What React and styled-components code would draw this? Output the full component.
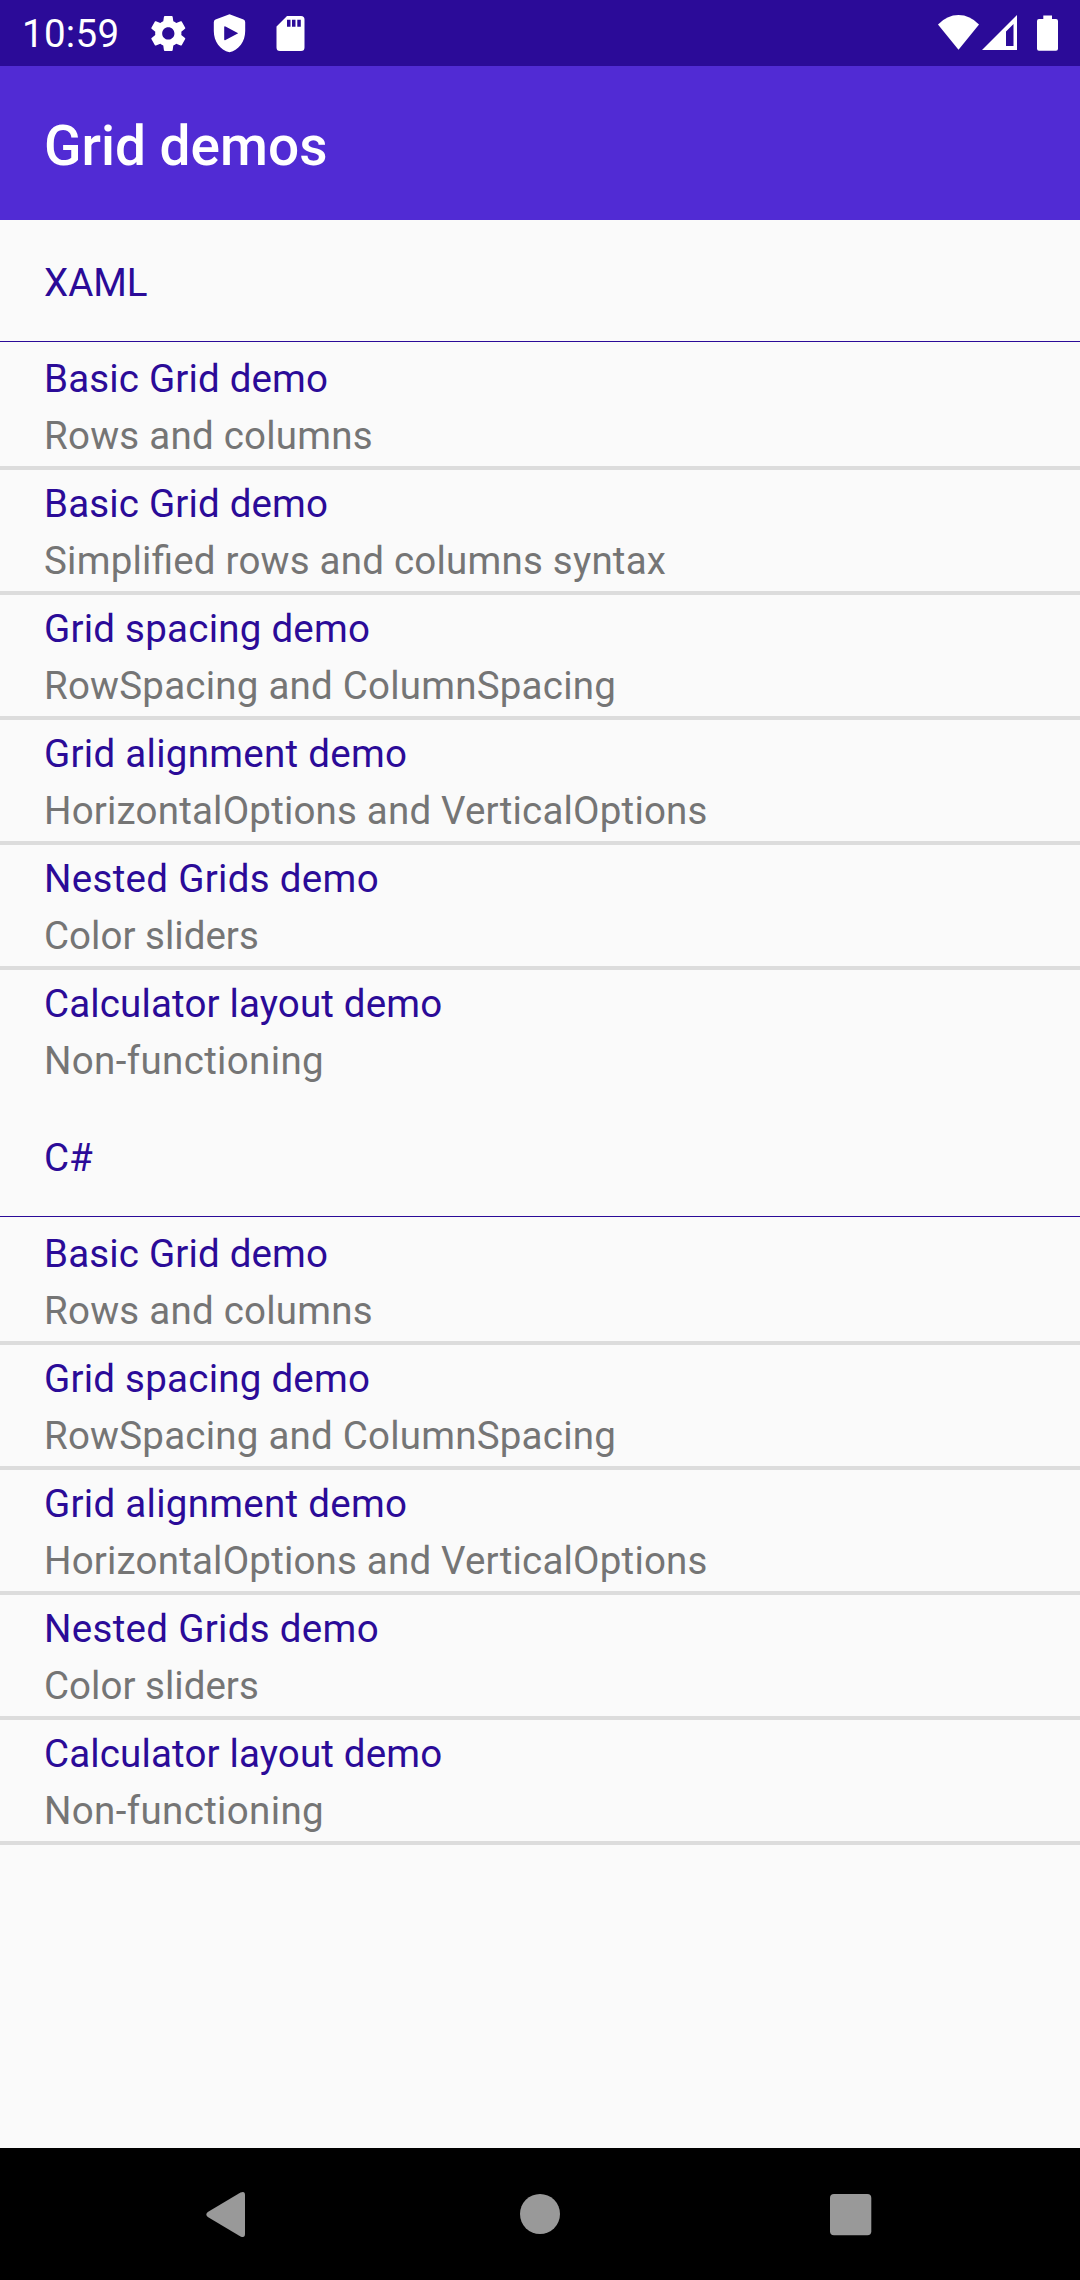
import React from "react";
import styled, { createGlobalStyle } from "styled-components";

const GlobalStyle = createGlobalStyle`
  * { box-sizing: border-box; }
  body { margin: 0; background: #fafafa; font-family: Roboto, "Liberation Sans", sans-serif; }
`;

const Screen = styled.div`
  display: flex;
  flex-direction: column;
  width: 1080px;
  height: 2280px;
  background: #fafafa;
  overflow: hidden;
`;

const StatusBar = styled.header`
  flex: none;
  display: flex;
  justify-content: space-between;
  height: 66px;
  padding: 0 21px 0 22px;
  background: #2b0b98;
  color: #fff;
`;

const StatusGroup = styled.div`
  display: flex;
  align-items: flex-start;
`;

const Clock = styled.span`
  width: 125px;
  font-size: 38.5px;
  letter-spacing: 0.3px;
  line-height: 68px;
`;

const Glyph = styled.svg`
  display: block;
  flex: none;
  fill: #fff;
`;

const AppBar = styled.div`
  flex: none;
  height: 154px;
  padding-left: 44px;
  background: #512bd4;
`;

const Title = styled.h1`
  margin: 0;
  color: #fff;
  font-size: 55px;
  font-weight: 500;
  line-height: 160px;
`;

const List = styled.main`
  flex: 1;
`;

const SectionHeader = styled.h2`
  display: flex;
  flex-direction: column;
  height: 125px;
  margin: 0;
  color: #2b0b98;
  font-size: 38.5px;
  font-weight: 400;
`;

const SectionName = styled.span`
  height: 122px;
  padding-left: 44px;
  border-bottom: 1px solid #2b0b98;
  line-height: 125px;
`;

const Row = styled.div`
  height: 125px;
  padding: 5px 0 0 44px;
  border-bottom: 4px solid ${(p) => (p.$divided ? "#dcdcdc" : "transparent")};
  font-size: 38.5px;
  line-height: 57px;
  font-feature-settings: "liga" 1;
`;

const Name = styled.div`
  color: #2b0b98;
  letter-spacing: ${(p) => p.$tracking}px;
`;

const Detail = styled.div`
  color: #757575;
  letter-spacing: ${(p) => p.$tracking}px;
`;

const NavBar = styled.nav`
  flex: none;
  display: flex;
  align-items: center;
  gap: 240px;
  height: 132px;
  padding-left: 190px;
  background: #000;
`;

const NavGlyph = styled.svg`
  display: block;
  flex: none;
  fill: #999;
`;

const basic = { name: "Basic Grid demo", nameTracking: 0.17, detail: "Rows and columns", detailTracking: 0.24 };
const simplified = { name: "Basic Grid demo", nameTracking: 0.17, detail: "Simplified rows and columns syntax", detailTracking: 0.22 };
const spacing = { name: "Grid spacing demo", nameTracking: 0.24, detail: "RowSpacing and ColumnSpacing", detailTracking: 0.22 };
const alignment = { name: "Grid alignment demo", nameTracking: 0.28, detail: "HorizontalOptions and VerticalOptions", detailTracking: 0.19 };
const nested = { name: "Nested Grids demo", nameTracking: 0.31, detail: "Color sliders", detailTracking: 0.02 };
const calculator = { name: "Calculator layout demo", nameTracking: 0.15, detail: "Non-functioning", detailTracking: 0.35 };

const sections = [
  {
    name: "XAML",
    lastDivider: false,
    rows: [basic, simplified, spacing, alignment, nested, calculator],
  },
  {
    name: "C#",
    lastDivider: true,
    rows: [basic, spacing, alignment, nested, calculator],
  },
];

const NotificationIcons = () => (
  <Glyph width="165" height="66" viewBox="147 0 165 66">
    <path
      transform="translate(147.3 12.4) scale(1.75)"
      d="M19.43 12.98c.04-.32.07-.64.07-.98s-.03-.66-.07-.98l2.11-1.65c.19-.15.24-.42.12-.64l-2-3.46c-.12-.22-.39-.3-.61-.22l-2.49 1c-.52-.4-1.08-.73-1.69-.98l-.38-2.65C14.46 2.18 14.25 2 14 2h-4c-.25 0-.46.18-.49.42l-.38 2.65c-.61.25-1.17.59-1.69.98l-2.49-1c-.23-.09-.49 0-.61.22l-2 3.46c-.13.22-.07.49.12.64l2.11 1.65c-.04.32-.07.65-.07.98s.03.66.07.98l-2.11 1.65c-.19.15-.24.42-.12.64l2 3.46c.12.22.39.3.61.22l2.49-1c.52.4 1.08.73 1.69.98l.38 2.65c.03.24.24.42.49.42h4c.25 0 .46-.18.49-.42l.38-2.65c.61-.25 1.17-.59 1.69-.98l2.49 1c.23.09.49 0 .61-.22l2-3.46c.12-.22.07-.49-.12-.64l-2.11-1.65zM12 15.5c-1.93 0-3.5-1.57-3.5-3.5s1.57-3.5 3.5-3.5 3.5 1.57 3.5 3.5-1.57 3.5-3.5 3.5z"
    />
    <path
      fillRule="evenodd"
      d="M229.5 14.2 L243.5 19.500 Q245.2 20.3 245.2 22.2 V31 C245.2 41.500 239 50 229.5 52.3 C220 50 213.800 41.500 213.800 31 V22.200 Q213.800 20.300 215.500 19.500 Z M224.200 27.300 V39.300 Q224.200 40.800 225.500 40.100 L238.200 33.300 L225.500 26.500 Q224.200 25.800 224.200 27.300 Z"
    />
    <path
      fillRule="evenodd"
      d="M287 16 H301 Q304.500 16 304.500 19.500 V47.500 Q304.500 51 301 51 H280 Q276.500 51 276.500 47.500 V26.500 Z M287 19.800 V26.700 H290.500 V19.800 Z M292 19.800 V26.700 H295.500 V19.800 Z M297.300 19.800 V26.700 H300.800 V19.800 Z"
    />
  </Glyph>
);

const SystemIcons = () => (
  <Glyph width="124" height="66" viewBox="935 0 124 66">
    <path d="M958.500 49.700 L938 24.500 Q947 15 958.500 15 T979 24.500 Z" />
    <path fillRule="evenodd" d="M1017 15 V50 H982 Z M1013.500 24 L1006 31.500 V46 H1013.500 Z" />
    <path d="M1043.300 15.500 H1052 V19 H1056 Q1058 19 1058 21 V48.800 Q1058 50.800 1056 50.800 H1039 Q1037 50.800 1037 48.800 V21 Q1037 19 1039 19 H1043.300 Z" />
  </Glyph>
);

export default function App() {
  return (
    <>
      <GlobalStyle />
      <Screen>
        <StatusBar>
          <StatusGroup>
            <Clock>10:59</Clock>
            <NotificationIcons />
          </StatusGroup>
          <StatusGroup>
            <SystemIcons />
          </StatusGroup>
        </StatusBar>
        <AppBar>
          <Title>Grid demos</Title>
        </AppBar>
        <List>
          {sections.map((section) => (
            <section key={section.name}>
              <SectionHeader>
                <SectionName>{section.name}</SectionName>
              </SectionHeader>
              {section.rows.map((row, i) => (
                <Row
                  key={i}
                  $divided={section.lastDivider || i < section.rows.length - 1}
                >
                  <Name $tracking={row.nameTracking}>{row.name}</Name>
                  <Detail $tracking={row.detailTracking}>{row.detail}</Detail>
                </Row>
              ))}
            </section>
          ))}
        </List>
        <NavBar>
          <NavGlyph width="80" height="60" viewBox="190 2184 80 60">
            <path d="M240.500 2192.600 Q245 2190.600 245 2195 V2234 Q245 2238.400 240.500 2236.400 L207.800 2217 Q204.800 2214.500 207.800 2212 Z" />
          </NavGlyph>
          <NavGlyph width="60" height="60" viewBox="510 2184 60 60">
            <circle cx="540" cy="2214" r="20" />
          </NavGlyph>
          <NavGlyph width="80" height="60" viewBox="810 2184 80 60">
            <rect x="830" y="2194" width="41.300" height="41.300" rx="4" />
          </NavGlyph>
        </NavBar>
      </Screen>
    </>
  );
}
